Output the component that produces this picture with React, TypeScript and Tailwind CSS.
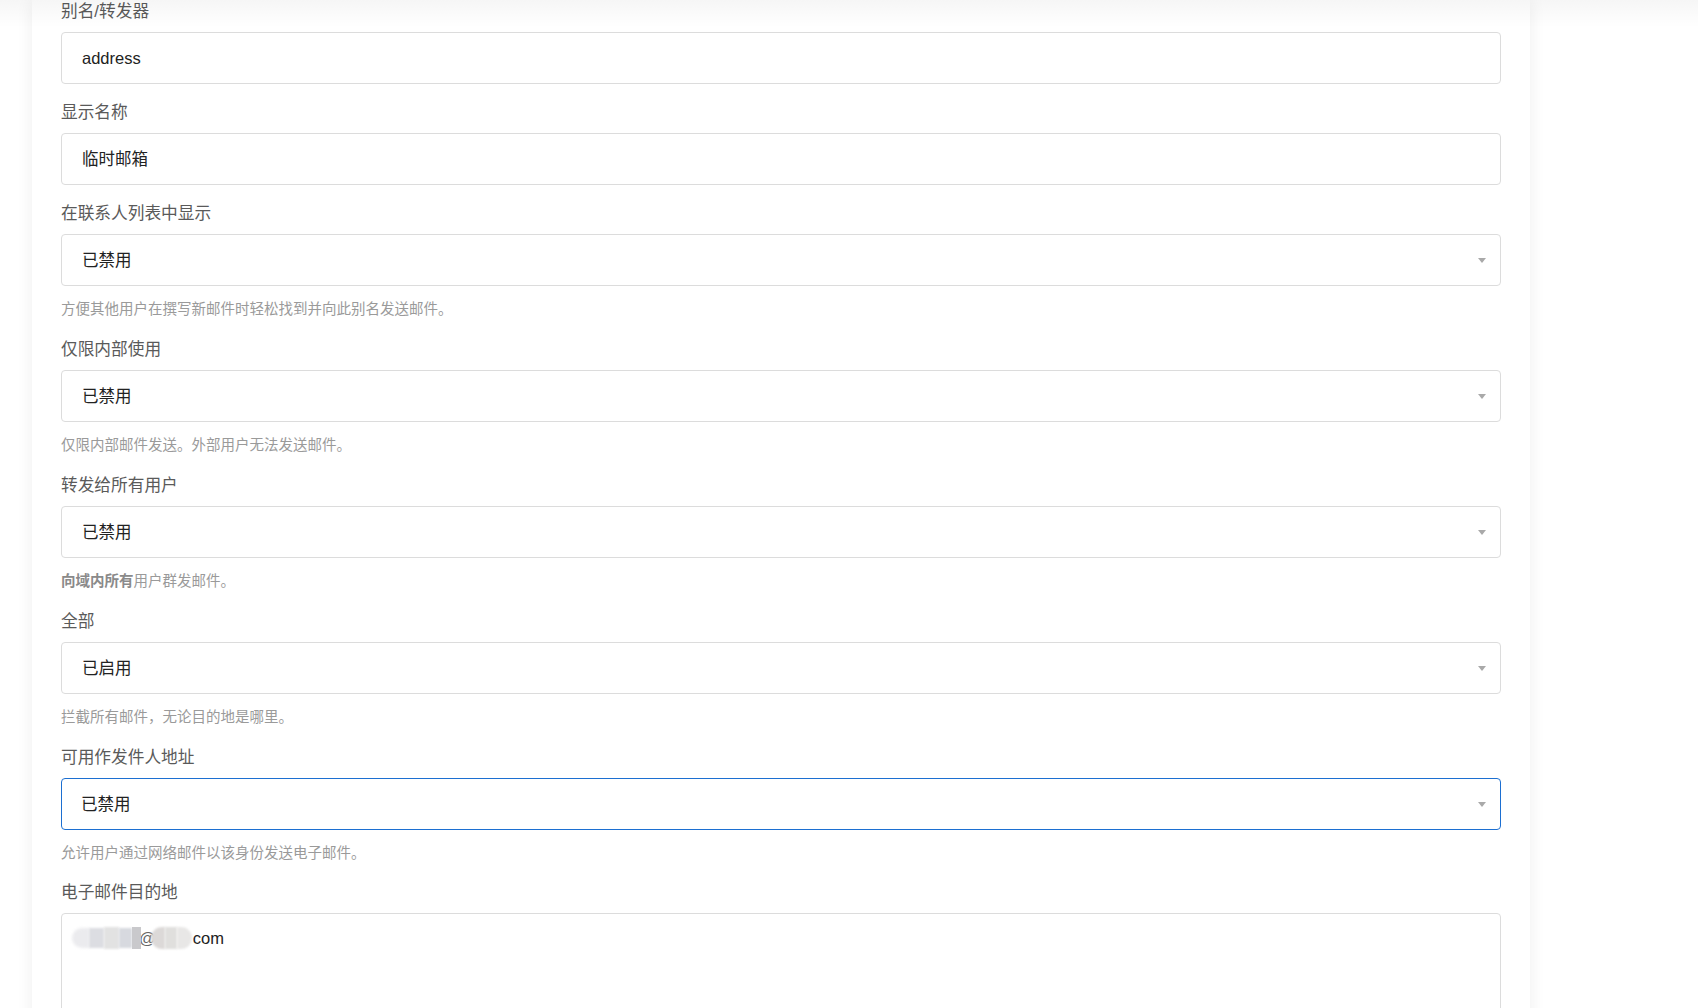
import React from "react";

const font = { fontFamily: '"Liberation Sans", "Noto Sans CJK SC", sans-serif' };

function Arrow() {
  return (
    <svg width="8" height="5" viewBox="0 0 8 5" className="shrink-0">
      <path d="M0 0 H8 L4 5 Z" fill="#a9a9a9" />
    </svg>
  );
}

type FieldProps = {
  label: string;
  value?: string;
  select?: boolean;
  focused?: boolean;
  help?: React.ReactNode;
};

function Field({ label, value, select, focused, help }: FieldProps) {
  return (
    <div className="mb-[17px]">
      <div className="text-[16.7px] leading-6 mb-2 text-[#5a5a5a]">{label}</div>
      <div
        className={
          focused
            ? "h-[52px] rounded-[4px] border-[1.5px] border-[#1c6fd1] flex items-center justify-between pl-[19px] pr-[14px] text-[16.5px] text-[#222]"
            : "h-[52px] rounded-[4px] border border-[#dcdcdc] flex items-center justify-between pl-5 pr-[14px] text-[16.5px] text-[#222]"
        }
      >
        <span>{value}</span>
        {select ? <Arrow /> : null}
      </div>
      {help ? <div className="mt-3 leading-[23px] text-[14.5px] text-[#9a9a9a]">{help}</div> : null}
    </div>
  );
}

export default function App() {
  return (
    <div className="relative h-[1008px] overflow-hidden bg-white" style={font}>
      <div className="pointer-events-none absolute left-0 right-0 top-0 z-10 h-7 bg-gradient-to-b from-[rgba(0,0,0,0.035)] to-transparent" />
      <div className="ml-[32px] w-[1498px] bg-white px-[29px] shadow-[0_0_16px_rgba(0,0,0,0.07)] min-h-[1008px]">
        <Field label="别名/转发器" value="address" />
        <Field label="显示名称" value="临时邮箱" />
        <Field
          label="在联系人列表中显示"
          value="已禁用"
          select
          help="方便其他用户在撰写新邮件时轻松找到并向此别名发送邮件。"
        />
        <Field label="仅限内部使用" value="已禁用" select help="仅限内部邮件发送。外部用户无法发送邮件。" />
        <Field
          label="转发给所有用户"
          value="已禁用"
          select
          help={
            <span>
              <b className="font-bold text-[#8a8a8a]">向域内所有</b>用户群发邮件。
            </span>
          }
        />
        <Field label="全部" value="已启用" select help="拦截所有邮件，无论目的地是哪里。" />
        <Field
          label="可用作发件人地址"
          value="已禁用"
          select
          focused
          help="允许用户通过网络邮件以该身份发送电子邮件。"
        />
        <div className="-mt-px">
          <div className="text-[16.7px] leading-6 mb-2 text-[#5a5a5a]">电子邮件目的地</div>
          <div className="h-[140px] rounded-[4px] border border-[#dcdcdc] pl-[10px] pt-[12px]">
            <div className="flex items-center h-6 text-[16.5px] text-[#222]">
              <div className="flex items-center">
                <span className="w-[17px] h-[20px] rounded-l-[10px] bg-[#ebebee] blur-[1.5px]" />
                <span className="w-[15px] h-[20px] bg-[#dcdde2] blur-[1px]" />
                <span className="w-[15px] h-[22px] bg-[#e2e2e2] blur-[1px]" />
                <span className="w-[13px] h-[20px] bg-[#d7d9df] blur-[1px]" />
                <span className="w-[9px] h-[22px] bg-[#c9c9cc] blur-[0.5px]" />
                <span className="text-[#666] -ml-[2px]">@</span>
                <span className="-ml-[5px] w-[14px] h-[22px] rounded-l-[11px] bg-[#dcd9d8] blur-[1px]" />
                <span className="w-[12px] h-[22px] bg-[#e0dfdd] blur-[1px]" />
                <span className="w-[15px] h-[22px] rounded-r-[11px] bg-[#e8e7e6] blur-[1px]" />
              </div>
              <span className="ml-[1px]">com</span>
            </div>
          </div>
        </div>
      </div>
    </div>
  );
}
